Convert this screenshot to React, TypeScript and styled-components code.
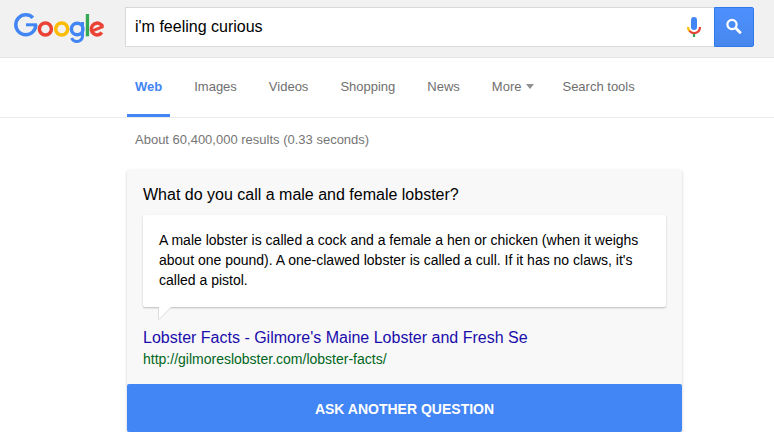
import React, { useState } from "react";
import styled, { createGlobalStyle } from "styled-components";

const GlobalStyle = createGlobalStyle`
  *, *::before, *::after { box-sizing: border-box; }
  body {
    margin: 0;
    background: #fff;
    color: #000;
    font-family: "Liberation Sans", Arial, sans-serif;
    font-size: 14px;
  }
`;

const Header = styled.header`
  display: flex;
  align-items: center;
  height: 58px;
  padding: 0 20px 3px 14px;
  background: #f1f1f1;
  border-bottom: 1px solid #e5e5e5;
`;

const LogoLink = styled.a`
  flex: none;
  display: block;
  width: 111px;
  height: 32px;
`;

const SearchForm = styled.form`
  flex: 1;
  display: flex;
  height: 40px;
`;

const SearchField = styled.div`
  flex: 1;
  display: flex;
  align-items: center;
  min-width: 0;
  background: #fff;
  border: 1px solid #d9d9d9;
  border-right: 0;
`;

const SearchInput = styled.input`
  flex: 1;
  min-width: 0;
  height: 36px;
  padding: 0 9px;
  border: 0;
  outline: 0;
  background: transparent;
  color: #000;
  font: 16px "Liberation Sans", Arial, sans-serif;
`;

const MicButton = styled.button`
  display: flex;
  align-items: center;
  justify-content: center;
  width: 40px;
  height: 38px;
  padding: 0;
  border: 0;
  background: transparent;
  cursor: pointer;
`;

const SearchButton = styled.button`
  display: flex;
  align-items: center;
  justify-content: center;
  width: 40px;
  height: 40px;
  padding: 0;
  border: 1px solid #3079ed;
  border-radius: 0 2px 2px 0;
  background: linear-gradient(#4d90fe, #4787ed);
  cursor: pointer;
`;

const Tabs = styled.nav`
  display: flex;
  gap: 16px;
  height: 60px;
  padding-left: 127px;
  border-bottom: 1px solid #ebebeb;
`;

const Tab = styled.a<{ $active?: boolean; $menu?: boolean }>`
  display: flex;
  align-items: center;
  gap: 5px;
  height: 59px;
  padding: 1px ${(p) => (p.$menu ? "4px" : "8px")} 0 8px;
  border-bottom: 3px solid ${(p) => (p.$active ? "#4285f4" : "transparent")};
  color: ${(p) => (p.$active ? "#4285f4" : "#6f6f6f")};
  font-size: 13px;
  font-weight: ${(p) => (p.$active ? "bold" : "normal")};
  text-decoration: none;
  white-space: nowrap;
`;

const Main = styled.main`
  max-width: 682px;
  padding-left: 127px;
`;

const Stats = styled.p`
  margin: 0;
  padding: 14px 8px 22px;
  color: #757575;
  font-size: 13px;
  line-height: 16px;
`;

const Card = styled.section`
  border-radius: 2px;
  background: #f8f8f8;
  box-shadow: 0 1px 3px rgba(0, 0, 0, 0.22);
`;

const CardBody = styled.div`
  padding: 15px 16px;
`;

const Question = styled.h1`
  margin: 0 0 10px;
  font-size: 16px;
  font-weight: normal;
  line-height: 20px;
`;

const Answer = styled.blockquote`
  position: relative;
  margin: 0 0 21px;
  padding: 15px 16px 17px;
  border-radius: 2px;
  background: #fff;
  box-shadow: 0 1px 2px rgba(0, 0, 0, 0.24);
  line-height: 20px;
`;

const BubbleTail = styled.svg`
  position: absolute;
  top: 100%;
  left: 15px;
`;

const SourceLink = styled.a`
  display: block;
  color: #1a0dab;
  font-size: 16px;
  line-height: 20px;
  text-decoration: none;
`;

const SourceUrl = styled.cite`
  display: block;
  margin-top: 1px;
  color: #006621;
  font-style: normal;
  line-height: 20px;
`;

const AskButton = styled.button`
  display: block;
  width: 100%;
  height: 48px;
  padding: 2px 0 0;
  border: 0;
  border-radius: 2px;
  background: #4285f4;
  color: #fff;
  font: bold 14px "Liberation Sans", Arial, sans-serif;
  cursor: pointer;
`;

const Logo = () => (
  <svg width="92" height="32" viewBox="14 11 92 32" fill="none" strokeWidth="3.5" role="img" aria-label="Google">
    <g stroke="#4285f4">
      <circle cx="25.8" cy="24.8" r="10" pathLength="360" strokeDasharray="315 45" />
      <line x1="26" y1="24.8" x2="37" y2="24.8" strokeWidth="3" />
    </g>
    <circle cx="45.4" cy="29" r="6" stroke="#ea4335" />
    <circle cx="61.7" cy="29" r="6" stroke="#fbbc05" />
    <g stroke="#4285f4">
      <circle cx="77.2" cy="29" r="5.8" />
      <line x1="82.5" y1="22" x2="82.5" y2="36" strokeWidth="3" />
      <circle cx="76.9" cy="35.8" r="5.7" strokeWidth="3" pathLength="360" strokeDasharray="157 203" />
    </g>
    <rect x="85.8" y="14" width="3.3" height="22.3" fill="#34a853" />
    <g stroke="#ea4335">
      <circle cx="97.2" cy="29" r="5.9" pathLength="360" strokeDasharray="300 60" transform="rotate(37 97.2 29)" />
      <line x1="91.8" y1="31.2" x2="103.4" y2="26.4" strokeWidth="2.9" />
    </g>
  </svg>
);

const MicIcon = () => (
  <svg width="16" height="22" viewBox="0 0 16 22" fill="none" strokeWidth="2.2" aria-hidden="true">
    <rect x="5" y="1" width="6" height="13" rx="3" fill="#4285f4" />
    <path d="M2 11a6 6 0 0 0 1.8 4.3" stroke="#fbbc05" />
    <path d="M3.4 14.9A6 6 0 0 0 14 11" stroke="#ea4335" />
    <path d="M8 17.8V21" stroke="#34a853" />
  </svg>
);

const SearchIcon = () => (
  <svg width="18" height="18" viewBox="0 0 18 18" fill="none" stroke="#fff" aria-hidden="true">
    <circle cx="7" cy="6.5" r="4.6" strokeWidth="2.2" />
    <path d="M10.3 9.8L15.8 15.3" strokeWidth="2.8" />
  </svg>
);

const Caret = () => (
  <svg width="8" height="5" viewBox="0 0 8 5" aria-hidden="true">
    <path d="M0 0h8L4 5z" fill="#909090" />
  </svg>
);

const tabs = ["Web", "Images", "Videos", "Shopping", "News", "More", "Search tools"];

export default function App() {
  const [query, setQuery] = useState("i'm feeling curious");

  return (
    <>
      <GlobalStyle />
      <Header>
        <LogoLink href="#home">
          <Logo />
        </LogoLink>
        <SearchForm role="search" onSubmit={(e) => e.preventDefault()}>
          <SearchField>
            <SearchInput
              type="text"
              aria-label="Search"
              value={query}
              onChange={(e) => setQuery(e.target.value)}
            />
            <MicButton type="button" aria-label="Search by voice">
              <MicIcon />
            </MicButton>
          </SearchField>
          <SearchButton type="submit" aria-label="Search">
            <SearchIcon />
          </SearchButton>
        </SearchForm>
      </Header>
      <Tabs>
        {tabs.map((name) => (
          <Tab key={name} href="#results" $active={name === "Web"} $menu={name === "More"}>
            {name}
            {name === "More" && <Caret />}
          </Tab>
        ))}
      </Tabs>
      <Main>
        <Stats>About 60,400,000 results (0.33 seconds)</Stats>
        <Card>
          <CardBody>
            <Question>What do you call a male and female lobster?</Question>
            <Answer>
              A male lobster is called a cock and a female a hen or chicken (when it weighs about one
              pound). A one-clawed lobster is called a cull. If it has no claws, it's called a pistol.
              <BubbleTail width="14" height="13" viewBox="0 0 14 13" aria-hidden="true">
                <path d="M1 0v12L13 0z" fill="#fff" />
                <path d="M0.5 1v11.5M1 12.5L13 0.5" stroke="#dcdcdc" fill="none" />
              </BubbleTail>
            </Answer>
            <SourceLink href="http://gilmoreslobster.com/lobster-facts/">
              Lobster Facts - Gilmore's Maine Lobster and Fresh Se
            </SourceLink>
            <SourceUrl>http://gilmoreslobster.com/lobster-facts/</SourceUrl>
          </CardBody>
          <AskButton type="button">ASK ANOTHER QUESTION</AskButton>
        </Card>
      </Main>
    </>
  );
}
